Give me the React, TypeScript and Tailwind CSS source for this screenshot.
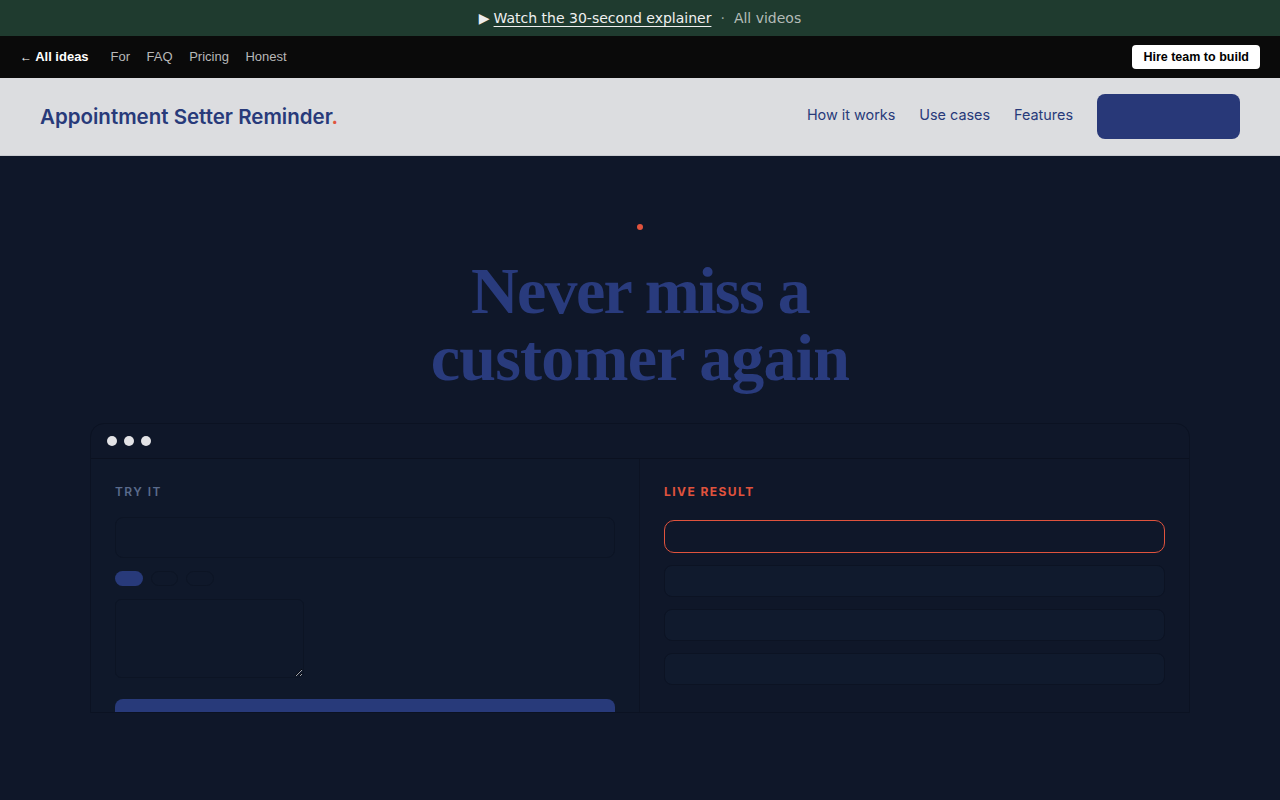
import React from "react";

export default function App() {
  return (
    <div className="min-h-[800px] bg-[#0f1729] font-['Inter',sans-serif]">
      {/* Top banner */}
      <div className="h-9 bg-[#1f3b2f] flex items-center justify-center font-['DejaVu_Sans',sans-serif] text-[14px] text-[#ececec]">
        <span className="mr-[4px]">▶</span>
        <a className="underline underline-offset-[3px] text-[#f0f0f0]">Watch the 30-second explainer</a>
        <span className="mx-[9px] text-[#9aa8a1]">·</span>
        <span className="text-[#b4bcb8]">All videos</span>
      </div>

      {/* Nav bar */}
      <div className="h-[42px] bg-[#0a0a0a] flex items-center justify-between pl-[20px] pr-5 font-['Liberation_Sans',Arial,sans-serif] text-[13px]">
        <div className="flex items-center">
          <span className="text-white font-bold">
            <span className="font-normal text-[12px]">←</span> All ideas
          </span>
          <span className="ml-[22px] text-[#b8b8b8]">For</span>
          <span className="ml-[16.5px] text-[#b8b8b8]">FAQ</span>
          <span className="ml-[16.5px] text-[#b8b8b8]">Pricing</span>
          <span className="ml-[16.5px] text-[#b8b8b8]">Honest</span>
        </div>
        <button className="h-6 px-[11px] bg-white rounded-[4px] text-black font-bold text-[12.5px]">Hire team to build</button>
      </div>

      {/* Header */}
      <header className="h-[78px] bg-[#dcdde0] flex items-center justify-between pl-10 pr-10 border-b border-[#c9cbd0]">
        <div className="text-[20.5px] font-semibold text-[#283a7a] tracking-[0em] mt-[1px]">
          Appointment Setter Reminder<span className="text-[#e0533d]">.</span>
        </div>
        <nav className="flex items-center text-[14.4px] text-[#283a7a]">
          <a className="mr-6 mb-[3px]">How it works</a>
          <a className="mr-6 mb-[3px]">Use cases</a>
          <a className="mr-6 mb-[3px]">Features</a>
          <button className="w-[143px] h-[45px] rounded-lg bg-[#283878]"></button>
        </nav>
      </header>

      {/* Hero */}
      <main className="flex flex-col items-center pt-[61px]">
        <div className="h-5 w-[30px] rounded-full flex items-center justify-center">
          <span className="w-[6px] h-[6px] rounded-full bg-[#e0533d]"></span>
        </div>
        <h1 className="mt-5 text-center font-['Liberation_Serif',serif] font-bold text-[66px] leading-[67px] tracking-[-0.025em] text-[#293b7d]">
          Never miss a<br />
          <span className="tracking-[-0.012em]">customer again</span>
        </h1>

        <div className="mt-8 w-[1100px] h-[290px] overflow-hidden rounded-t-[14px] border border-[#0b1222] bg-[#0f1729] shadow-[0_0_50px_14px_rgba(255,255,255,0.008)]">
          <div className="h-[35px] flex items-center gap-[7px] pl-4 border-b border-[#0b1120]">
            <span className="w-[10px] h-[10px] rounded-full bg-[#e3e3e6]"></span>
            <span className="w-[10px] h-[10px] rounded-full bg-[#e3e3e6]"></span>
            <span className="w-[10px] h-[10px] rounded-full bg-[#e3e3e6]"></span>
          </div>
          <div className="grid grid-cols-2">
            {/* Left */}
            <div className="p-6 border-r border-[#0c1323] bg-[#0f182a]">
              <div className="text-[12px] font-semibold tracking-[0.12em] text-[#5a6b8c] leading-[18px]">TRY IT</div>
              <div className="mt-4 h-[41px] rounded-lg border border-[#0c1424] bg-[#0f182a]"></div>
              <div className="mt-[13px] flex gap-2">
                <span className="w-[28px] h-[15px] rounded-full bg-[#283a7a]"></span>
                <span className="w-[27px] h-[15px] rounded-full border border-[#0c1424]"></span>
                <span className="w-[28px] h-[15px] rounded-full border border-[#0c1424]"></span>
              </div>
              <textarea className="mt-[13px] block w-[189px] h-[79px] rounded-md border border-[#0c1424] bg-[#0f182a] outline-none"></textarea>
              <div className="mt-[21px] h-10 rounded-lg bg-[#283a7a]"></div>
            </div>
            {/* Right */}
            <div className="p-6 bg-[#0f1729]">
              <div className="text-[12px] font-bold tracking-[0.12em] text-[#e0533d] leading-[18px]">LIVE RESULT</div>
              <div className="mt-[19px] w-[501px] h-[33px] rounded-[10px] border border-[#e0533d]"></div>
              <div className="mt-3 flex flex-col gap-3 w-[501px]">
                <div className="h-[32px] rounded-lg border border-[#0c1323] bg-[#101a2d]"></div>
                <div className="h-[32px] rounded-lg border border-[#0c1323] bg-[#101a2d]"></div>
                <div className="h-[32px] rounded-lg border border-[#0c1323] bg-[#101a2d]"></div>
              </div>
            </div>
          </div>
        </div>
      </main>
    </div>
  );
}
